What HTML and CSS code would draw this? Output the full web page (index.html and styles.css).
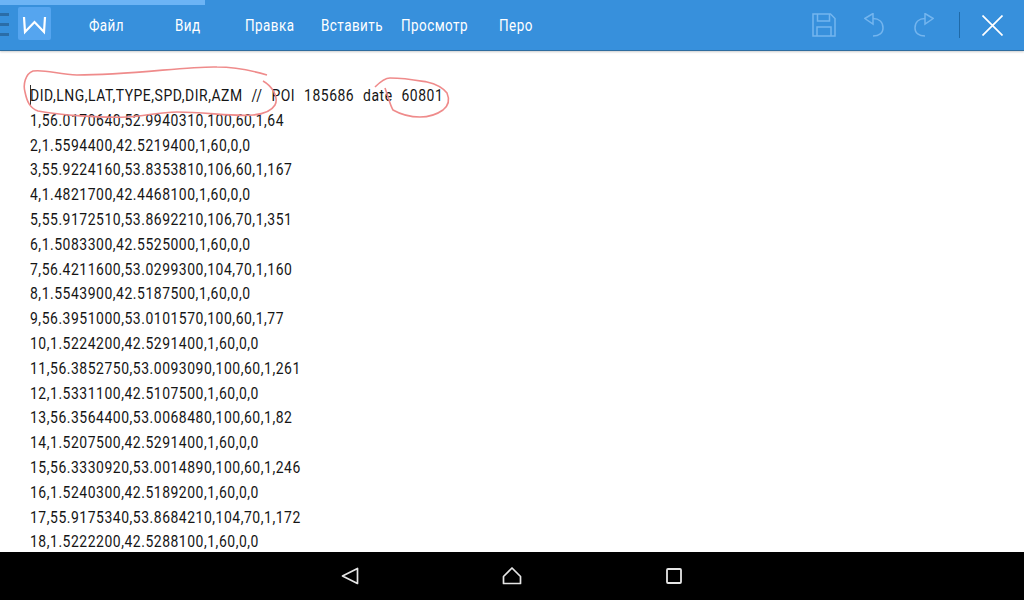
FILE: index.html
```html
<!DOCTYPE html>
<html lang="ru">
<head>
<meta charset="utf-8">
<title>Документ</title>
<link rel="stylesheet" href="styles.css">
</head>
<body>
<div class="screen">
  <header class="toolbar">
    <div class="progress"></div>
    <div class="hamburger"><i></i><i></i><i></i></div>
    <div class="logo">
      <svg width="33" height="33" viewBox="0 0 33 33"><path d="M6 10 L7 25 L16.500 15 L26 25 L27 10" fill="none" stroke="#fff" stroke-width="2.200" stroke-linejoin="miter"/></svg>
    </div>
    <nav class="menu">
      <span>Файл</span>
      <span>Вид</span>
      <span>Правка</span>
      <span>Вставить</span>
      <span>Просмотр</span>
      <span>Перо</span>
    </nav>
    <div class="actions">
      <svg class="save" width="24" height="24" viewBox="0 0 24 24"><g fill="none" stroke="#74b5ee" stroke-width="1.500"><path d="M1 1 H18.500 L23 5.500 V23 H1 Z"/><path d="M5.500 1 V8 H17.500 V1"/><path d="M5 23 V14 H19 V23"/></g></svg>
      <svg class="undo" width="20" height="24" viewBox="0 0 20 24"><g fill="none" stroke="#74b5ee" stroke-width="1.500"><path d="M9 0.500 L0.800 5.500 L9 11 Z"/><path d="M9 5.500 C15 5.500 19 9 19 15 C19 20 15 23 9 23"/></g></svg>
      <svg class="redo" width="20" height="24" viewBox="0 0 20 24"><g fill="none" stroke="#74b5ee" stroke-width="1.500"><path d="M11 0.500 L19.200 5.500 L11 11 Z"/><path d="M11 5.500 C5 5.500 1 9 1 15 C1 20 5 23 11 23"/></g></svg>
      <div class="sep"></div>
      <svg class="close" width="21" height="21" viewBox="0 0 21 21"><path d="M0.500 0.500 L20.500 20.500 M20.500 0.500 L0.500 20.500" stroke="#fff" stroke-width="1.700" fill="none"/></svg>
    </div>
  </header>
  <main class="doc">
    <div class="line first"><span class="caret"></span><span>DID,LNG,LAT,TYPE,SPD,DIR,AZM&nbsp; //&nbsp; POI&nbsp; 185686&nbsp; date&nbsp; 60801</span></div>
    <div class="line">1,56.0170640,52.9940310,100,60,1,64</div>
    <div class="line">2,1.5594400,42.5219400,1,60,0,0</div>
    <div class="line">3,55.9224160,53.8353810,106,60,1,167</div>
    <div class="line">4,1.4821700,42.4468100,1,60,0,0</div>
    <div class="line">5,55.9172510,53.8692210,106,70,1,351</div>
    <div class="line">6,1.5083300,42.5525000,1,60,0,0</div>
    <div class="line">7,56.4211600,53.0299300,104,70,1,160</div>
    <div class="line">8,1.5543900,42.5187500,1,60,0,0</div>
    <div class="line">9,56.3951000,53.0101570,100,60,1,77</div>
    <div class="line">10,1.5224200,42.5291400,1,60,0,0</div>
    <div class="line">11,56.3852750,53.0093090,100,60,1,261</div>
    <div class="line">12,1.5331100,42.5107500,1,60,0,0</div>
    <div class="line">13,56.3564400,53.0068480,100,60,1,82</div>
    <div class="line">14,1.5207500,42.5291400,1,60,0,0</div>
    <div class="line">15,56.3330920,53.0014890,100,60,1,246</div>
    <div class="line">16,1.5240300,42.5189200,1,60,0,0</div>
    <div class="line">17,55.9175340,53.8684210,104,70,1,172</div>
    <div class="line">18,1.5222200,42.5288100,1,60,0,0</div>
  </main>
  <svg class="ink" width="1024" height="120" viewBox="0 0 1024 120">
    <path d="M267 75 C250 70 235 67 217 67 C190 66 130 75 77 75 C60 75 45 69 33 71 C25 74 23 85 25 92 C27 102 30 108 38 111 C60 115 100 118 127 117 C145 116 160 112 177 112 C205 112 235 117 253 115 C265 114 272 110 275 105 C279 97 272 86 263 81" fill="none" stroke="#ef8b8b" stroke-width="1.600"/>
    <path d="M375 87 C380 82 385 78 390 78 C405 78 415 80 427 82 C436 84 443 88 447 93 C450 100 448 106 443 110 C436 115 428 117 420 117 C410 117 400 114 393 110 C390 105 388 96 385 88" fill="none" stroke="#ef8b8b" stroke-width="1.600"/>
  </svg>
  <footer class="navbar">
    <svg class="back" width="18" height="18" viewBox="0 0 18 18"><path d="M16.500 1.500 V16.500 L1.500 9 Z" fill="none" stroke="#e6e6e6" stroke-width="1.700" stroke-linejoin="round"/></svg>
    <svg class="home" width="20" height="18" viewBox="0 0 20 18"><path d="M10 1 L18.500 9.500 V16.500 H1.500 V9.500 Z" fill="none" stroke="#e6e6e6" stroke-width="1.700" stroke-linejoin="round"/></svg>
    <svg class="recent" width="16" height="16" viewBox="0 0 16 16"><rect x="1" y="1" width="14" height="14" fill="none" stroke="#e6e6e6" stroke-width="1.800" rx="1"/></svg>
  </footer>
</div>
</body>
</html>
```

FILE: styles.css
```css
* { box-sizing: border-box; }
html, body { margin: 0; padding: 0; }
body { width: 1024px; height: 600px; overflow: hidden; background: #fff; font-family: "Roboto", "Liberation Sans", sans-serif; }
.screen { position: relative; width: 1024px; height: 600px; display: flex; flex-direction: column; }
.toolbar { position: relative; flex: 0 0 51px; display: flex; align-items: center; background: #3790dc; border-bottom: 1px solid #2f6d9f; box-shadow: 0 1px 2px rgba(0,0,0,.2); z-index: 2; }
.progress { position: absolute; left: 0; top: 0; width: 205px; height: 5px; background: #6cb4f5; }
.hamburger { width: 9px; height: 23px; margin-top: -2px; display: flex; flex-direction: column; justify-content: space-between; }
.hamburger i { display: block; height: 3px; background: #2a6da8; }
.logo { width: 33px; height: 33px; margin-left: 9px; margin-top: -3px; background: #55a5ef; border-radius: 2px; }
.logo svg { display: block; }
.menu { display: grid; grid-template-columns: 86px 70px 76px 80px 98px auto; margin-left: 38px; margin-top: 1px; color: #fff; font-size: 16px; line-height: 16px; }
.menu span { white-space: nowrap; transform: scaleX(.84); transform-origin: left center; letter-spacing: .55px; }
.actions { margin-left: auto; padding-right: 21px; display: flex; align-items: center; }
.actions svg { display: block; }
.undo { margin-left: 28px; }
.redo { margin-left: 30px; }
.sep { width: 1px; height: 26px; background: #1f6aa8; margin-left: 25px; }
.close { margin-left: 22px; }
.doc { flex: 1; padding: 33px 0 0 30px; overflow: hidden; color: #151515; font-size: 16px; }
.line { height: 24.800px; line-height: 24.800px; white-space: nowrap; transform: scaleX(.87); transform-origin: left center; letter-spacing: .625px; }
.line.first { position: relative; word-spacing: .5px; }
.caret { position: absolute; left: 0; top: 1px; width: 1px; height: 21px; background: #111; }
.ink { position: absolute; left: 0; top: 0; pointer-events: none; z-index: 3; }
.navbar { position: relative; flex: 0 0 48px; background: #000; z-index: 4; display: flex; align-items: center; padding-left: 341px; }
.navbar svg { display: block; }
.home { margin-left: 143px; }
.recent { margin-left: 144px; }
```
